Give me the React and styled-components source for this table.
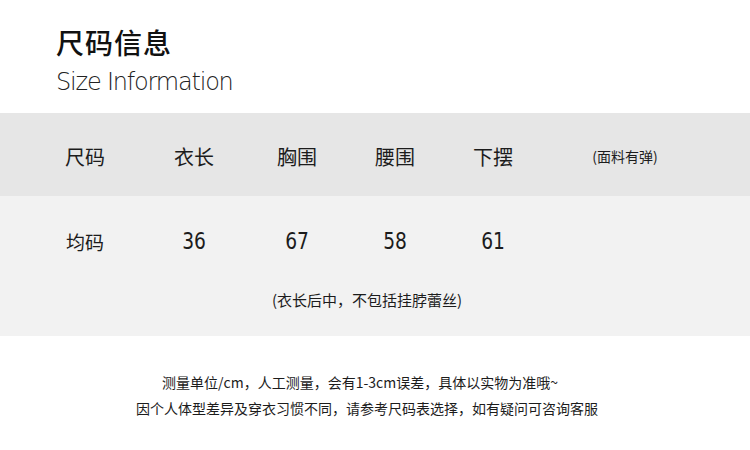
import styled, { createGlobalStyle } from 'styled-components';

const GlobalStyle = createGlobalStyle`
  html, body {
    margin: 0;
    padding: 0;
    background: #fff;
  }
  body {
    font-family: "Noto Sans CJK SC", "Noto Sans", sans-serif;
    color: #1a1a1a;
  }
`;

const Page = styled.div`
  width: 750px;
  height: 450px;
  overflow: hidden;
  background: #fff;
`;

const TitleBlock = styled.div`
  padding: 22px 0 0 56px;
  height: 113px;
  box-sizing: border-box;
`;

const TitleCn = styled.div`
  font-size: 28px;
  line-height: 40px;
  font-weight: 500;
  letter-spacing: 1px;
  color: #111;
`;

const TitleEn = styled.div`
  font-family: "DejaVu Sans", sans-serif;
  font-size: 24px;
  line-height: 30px;
  font-weight: 200;
  color: #222;
  letter-spacing: -1.2px;
  margin-top: 5px;
`;

const Band = styled.div`
  background: ${(p) => p.bg};
  height: ${(p) => p.h}px;
  display: flex;
  flex-direction: column;
`;

const Row = styled.div`
  display: grid;
  grid-template-columns: 35px 100px 118px 88px 108px 88px 176px;
  align-items: center;
  height: ${(p) => p.h}px;
  margin-top: ${(p) => p.top || 0}px;
`;

const Cell = styled.div`
  grid-column: ${(p) => p.col};
  text-align: center;
  font-size: ${(p) => p.size || 20}px;
  color: #1c1c1c;
  white-space: nowrap;
`;

const Num = styled(Cell)`
  font-family: "Liberation Sans Narrow", "DejaVu Sans Condensed", sans-serif;
  font-size: 23px;
  transform: scaleX(0.9);
`;

const Note = styled.div`
  text-align: center;
  font-size: 15px;
  color: #1c1c1c;
  padding-right: 16px;
  margin-top: 28px;
`;

const Footer = styled.div`
  padding-top: 36px;
  display: flex;
  flex-direction: column;
  align-items: center;
  gap: 6px;
  font-size: 14px;
  line-height: 20px;
  color: #1c1c1c;
`;

const FooterLine = styled.div`
  margin-right: ${(p) => p.shift}px;
`;

const heads = ['尺码', '衣长', '胸围', '腰围', '下摆'];
const values = ['36', '67', '58', '61'];

export default function App() {
  return (
    <Page>
      <GlobalStyle />
      <TitleBlock>
        <TitleCn>尺码信息</TitleCn>
        <TitleEn>Size Information</TitleEn>
      </TitleBlock>
      <Band bg="#e6e6e6" h={83}>
        <Row h={83} top={3}>
          {heads.map((h, i) => (
            <Cell key={h} col={i + 2}>{h}</Cell>
          ))}
          <Cell col={7} size={14}>(面料有弹)</Cell>
        </Row>
      </Band>
      <Band bg="#f2f2f2" h={140}>
        <Row h={40} top={25}>
          <Cell col={2} size={19}>均码</Cell>
          {values.map((v, i) => (
            <Num key={v} col={i + 3}>{v}</Num>
          ))}
        </Row>
        <Note>(衣长后中，不包括挂脖蕾丝)</Note>
      </Band>
      <Footer>
        <FooterLine shift={30}>测量单位/cm，人工测量，会有1-3cm误差，具体以实物为准哦~</FooterLine>
        <FooterLine shift={16}>因个人体型差异及穿衣习惯不同，请参考尺码表选择，如有疑问可咨询客服</FooterLine>
      </Footer>
    </Page>
  );
}
